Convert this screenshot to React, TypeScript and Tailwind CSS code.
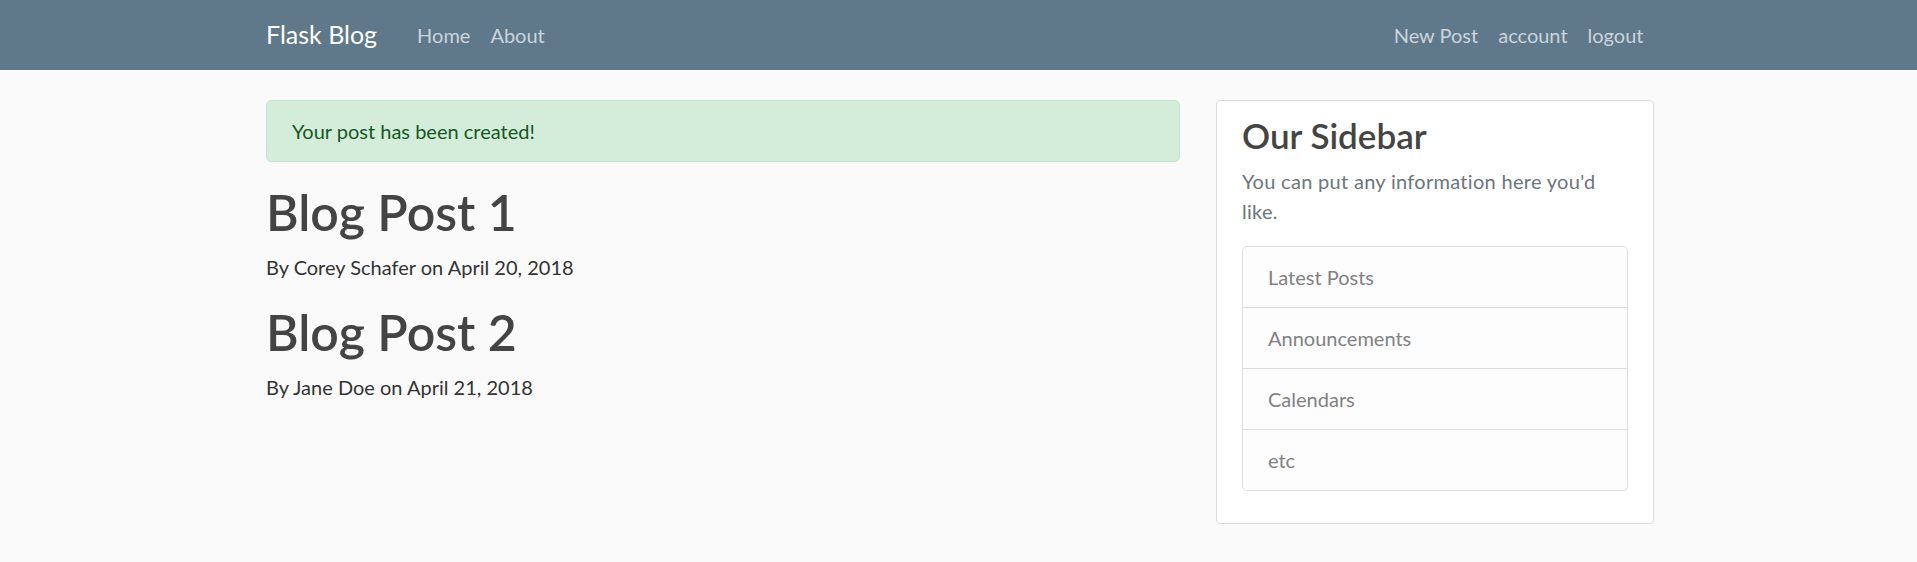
import React from 'react';

const posts = [
  { title: 'Blog Post 1', author: 'Corey Schafer', date: 'April 20, 2018' },
  { title: 'Blog Post 2', author: 'Jane Doe', date: 'April 21, 2018' },
];

const sidebarLinks = ['Latest Posts', 'Announcements', 'Calendars', 'etc'];

export default function App() {
  return (
    <div className="min-h-screen bg-[#fafafa] text-[20px] leading-[30px] text-[#333333] [font-family:'Segoe_UI',Lato,sans-serif]">
      <header>
        <nav className="h-[70px] bg-[#5f788a]">
          <div className="mx-auto flex h-full w-[1425px] items-center pl-[20px] pr-[17.5px]">
            <a href="#" className="mr-[30px] text-[25px] leading-[37.5px] text-white">
              Flask Blog
            </a>
            <div className="flex">
              <a href="#" className="px-[10px] text-[#cbd5db]">Home</a>
              <a href="#" className="px-[10px] text-[#cbd5db]">About</a>
            </div>
            <div className="ml-auto flex">
              <a href="#" className="px-[10px] text-[#cbd5db]">New Post</a>
              <a href="#" className="px-[10px] text-[#cbd5db]">account</a>
              <a href="#" className="px-[10px] text-[#cbd5db]">logout</a>
            </div>
          </div>
        </nav>
      </header>

      <main className="mx-auto w-[1425px] pl-[20px] pr-[17.5px] pt-[30px]">
        <div className="grid grid-cols-[913.5px_437.5px] gap-[36.5px]">
          <div>
            <div className="mb-[20px] rounded-[5px] border border-[#c3e6cb] bg-[#d4edda] px-[25px] py-[15px] text-[#155724]">
              Your post has been created!
            </div>
            {posts.map((post) => (
              <article key={post.title}>
                <h1 className="mb-[10px] text-[50px] leading-[60px] font-semibold text-[#444444]">
                  {post.title}
                </h1>
                <p className="mb-[20px]">
                  By {post.author} on {post.date}
                </p>
              </article>
            ))}
          </div>

          <div>
            <div className="mb-[25px] rounded-[4px] border border-[#dddddd] bg-white px-[25px] py-[12.5px]">
              <h3 className="mb-[10px] text-[35px] leading-[42px] font-semibold text-[#444444]">
                Our Sidebar
              </h3>
              <p className="mb-[20px] tracking-[0.3px] text-[#6c757d]">
                You can put any information here you'd like.
              </p>
              <ul className="mb-[20px] rounded-[5px] border border-[rgba(0,0,0,0.125)]">
                {sidebarLinks.map((item, i) => (
                  <li
                    key={item}
                    className={`bg-[#fdfdfe] px-[25px] py-[15px] text-[#818182] ${
                      i > 0 ? 'border-t border-[rgba(0,0,0,0.125)]' : 'rounded-t-[5px]'
                    } ${i === sidebarLinks.length - 1 ? 'rounded-b-[5px]' : ''}`}
                  >
                    {item}
                  </li>
                ))}
              </ul>
            </div>
          </div>
        </div>
      </main>
    </div>
  );
}
